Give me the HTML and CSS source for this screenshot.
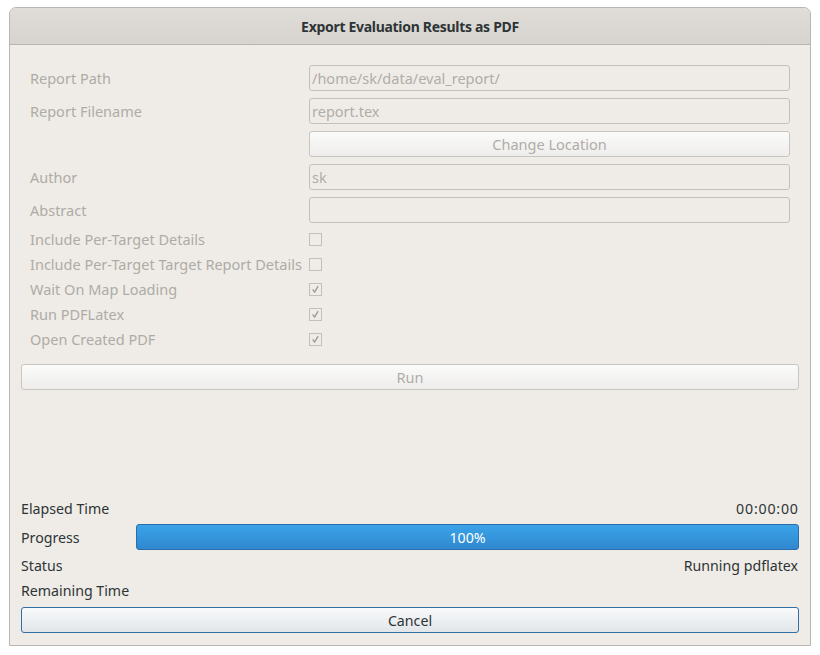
FILE: index.html
```html
<!DOCTYPE html>
<html>
<head>
<meta charset="utf-8">
<link rel="stylesheet" href="styles.css">
</head>
<body>
<div class="window">
  <div class="titlebar">Export Evaluation Results as PDF</div>
  <div class="content">
    <div class="form">
      <div class="label">Report Path</div>
      <div class="input">/home/sk/data/eval_report/</div>
      <div class="label">Report Filename</div>
      <div class="input">report.tex</div>
      <div class="label"></div>
      <div class="btn disabled">Change Location</div>
      <div class="label">Author</div>
      <div class="input">sk</div>
      <div class="label">Abstract</div>
      <div class="input"></div>
      <div class="label cb-label">Include Per-Target Details</div>
      <div class="cb-cell"><span class="checkbox"></span></div>
      <div class="label cb-label">Include Per-Target Target Report Details</div>
      <div class="cb-cell"><span class="checkbox"></span></div>
      <div class="label cb-label">Wait On Map Loading</div>
      <div class="cb-cell"><span class="checkbox"><svg width="13" height="13" viewBox="0 0 13 13"><path d="M4 6.8 L5.6 9.2 L8.8 3.6" fill="none" stroke="#a09d98" stroke-width="1.4" stroke-linecap="round" stroke-linejoin="round"/></svg></span></div>
      <div class="label cb-label">Run PDFLatex</div>
      <div class="cb-cell"><span class="checkbox"><svg width="13" height="13" viewBox="0 0 13 13"><path d="M4 6.8 L5.6 9.2 L8.8 3.6" fill="none" stroke="#a09d98" stroke-width="1.4" stroke-linecap="round" stroke-linejoin="round"/></svg></span></div>
      <div class="label cb-label">Open Created PDF</div>
      <div class="cb-cell"><span class="checkbox"><svg width="13" height="13" viewBox="0 0 13 13"><path d="M4 6.8 L5.6 9.2 L8.8 3.6" fill="none" stroke="#a09d98" stroke-width="1.4" stroke-linecap="round" stroke-linejoin="round"/></svg></span></div>
    </div>
    <div class="btn disabled run">Run</div>
    <div class="status">
      <div class="srow r-elapsed"><span>Elapsed Time</span><span class="time">00:00:00</span></div>
      <div class="prow"><span>Progress</span><div class="bar">100%</div></div>
      <div class="srow r-status"><span>Status</span><span>Running pdflatex</span></div>
      <div class="srow r-remain"><span>Remaining Time</span><span></span></div>
      <div class="btn cancel">Cancel</div>
    </div>
  </div>
</div>
</body>
</html>
```

FILE: styles.css
```css
html, body {
  margin: 0;
  padding: 0;
  background: #ffffff;
}
body {
  font-family: "Noto Sans", "Open Sans", sans-serif;
  font-size: 14.5px;
  color: #2e3436;
}
.window {
  margin: 7px 0 0 9px;
  width: 800px;
  height: 637px;
  border: 1px solid #b9b6b1;
  border-radius: 7px 7px 0 0;
  background: #efece7;
  display: flex;
  flex-direction: column;
  overflow: hidden;
}
.titlebar {
  height: 36px;
  flex: 0 0 36px;
  border-bottom: 1px solid #b9b6b1;
  background: linear-gradient(#e0ddd9, #d7d4cf);
  display: flex;
  align-items: center;
  justify-content: center;
  font-weight: bold;
  font-size: 14px;
  letter-spacing: -0.3px;
  color: #2e3436;
}
.content {
  flex: 1;
  display: flex;
  flex-direction: column;
  padding: 20px 11px 12px 11px;
}
.form {
  display: grid;
  grid-template-columns: 279px 1fr;
  grid-auto-rows: auto;
  row-gap: 7px;
  padding: 0 9px;
}
.label {
  color: #aeaba6;
  display: flex;
  align-items: center;
  white-space: nowrap;
  height: 26px;
}
.cb-label, .cb-cell {
  height: 18px;
}
.input {
  height: 24px;
  border: 1px solid #c3c0bb;
  border-radius: 3px;
  background: #efece7;
  color: #b0ada8;
  padding-left: 2px;
  display: flex;
  align-items: center;
}
.btn {
  height: 24px;
  border: 1px solid #c9c6c1;
  border-radius: 3px;
  background: linear-gradient(#fbfbfa, #eeedeb);
  display: flex;
  align-items: center;
  justify-content: center;
}
.btn.disabled {
  color: #b0ada8;
}
.cb-cell {
  display: flex;
  align-items: center;
}
.checkbox {
  width: 11px;
  height: 11px;
  border: 1px solid #c3c0bb;
  background: #efece7;
  display: block;
  position: relative;
  margin-top: 1px;
}
.checkbox svg {
  position: absolute;
  left: -1px;
  top: -1px;
}
.run {
  margin-top: 16px;
}
.status {
  margin-top: auto;
  display: flex;
  flex-direction: column;
  font-size: 14.2px;
}
.srow {
  display: flex;
  justify-content: space-between;
  align-items: center;
  height: 20px;
  padding-right: 1px;
}
.r-elapsed { margin-bottom: 4px; height: 17px; padding-bottom: 3px; }
.time { letter-spacing: 0.8px; margin-right: -0.8px; }
.r-status { height: 21px; margin-top: 5px; margin-bottom: 4px; }
.r-remain { margin-bottom: 7px; }
.prow {
  display: grid;
  grid-template-columns: 115px 1fr;
  align-items: center;
  height: 26px;
}
.bar {
  height: 24px;
  border: 1px solid #2a6dab;
  border-radius: 3px;
  background: linear-gradient(#3ba3e8, #2f88d0);
  color: #ffffff;
  display: flex;
  align-items: center;
  justify-content: center;
}
.cancel {
  border-color: #2f6fa5;
  background: linear-gradient(#f8fafb, #e2e6e9);
  color: #2e3436;
}
```
